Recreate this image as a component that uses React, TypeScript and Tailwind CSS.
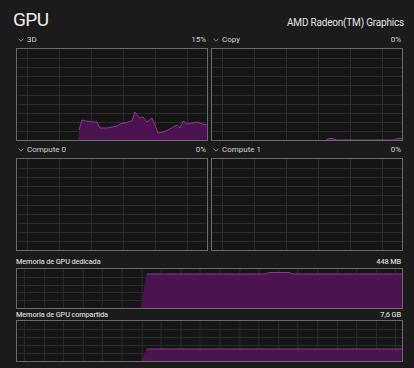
import React from "react";

const PURPLE_FILL = "#4b1450";
const PURPLE_LINE = "#8b3a8e";
const GRID = "#2c2c2c";

function Grid({ x0, y0, w, h, vStart, vStep, rows }: { x0: number; y0: number; w: number; h: number; vStart: number; vStep: number; rows: number }) {
  const vs: number[] = [];
  for (let x = vStart; x < x0 + w; x += vStep) vs.push(x);
  const hs: number[] = [];
  for (let i = 1; i < rows; i++) hs.push(y0 + (h * i) / rows);
  return (
    <g stroke={GRID} strokeWidth={1} shapeRendering="crispEdges">
      {vs.map((x, i) => (
        <line key={"v" + i} x1={Math.round(x) + 0.5} y1={y0} x2={Math.round(x) + 0.5} y2={y0 + h} />
      ))}
      {hs.map((y, i) => (
        <line key={"h" + i} x1={x0} y1={Math.round(y) + 0.5} x2={x0 + w} y2={Math.round(y) + 0.5} />
      ))}
    </g>
  );
}

function Chart({ x0, y0, w, h, vStart, vStep, rows, poly, height }: { x0: number; y0: number; w: number; h: number; vStart: number; vStep: number; rows: number; poly?: number[][]; height: string }) {
  return (
    <div className={`border border-[#6a6a6a] bg-[#151515] ${height}`}>
      <svg className="block w-full h-full" viewBox={`${x0} ${y0} ${w} ${h}`} preserveAspectRatio="none">
        <Grid x0={x0} y0={y0} w={w} h={h} vStart={vStart} vStep={vStep} rows={rows} />
        {poly && (
          <>
            <polygon points={poly.map((p) => p.join(",")).join(" ")} fill={PURPLE_FILL} />
            <polyline
              points={poly.slice(1, -1).map((p) => p.join(",")).join(" ")}
              fill="none"
              stroke={PURPLE_LINE}
              strokeWidth={1}
            />
          </>
        )}
      </svg>
    </div>
  );
}

function Label({ name, value }: { name: string; value: string }) {
  return (
    <div className="flex items-center justify-between h-[12px] text-[8px] leading-none text-[#d4d4d4]">
      <div className="flex items-center">
        <svg width="6" height="4" viewBox="0 0 6 4" className="ml-[2px] mr-[3px]">
          <path d="M0.5 0.6 L3 3.2 L5.5 0.6" fill="none" stroke="#9a9a9a" strokeWidth="0.9" />
        </svg>
        <span>{name}</span>
      </div>
      <span className="pr-[2px]">{value}</span>
    </div>
  );
}

const d3: number[][] = [
  [78, 140], [79, 130], [82, 120], [86, 121], [92, 122], [97, 122], [100, 128], [107, 128], [112, 127], [117, 126], [120, 124], [128, 122], [132, 121], [135, 112], [140, 118], [143, 117], [147, 122], [152, 118], [155, 125], [158, 133], [163, 132], [168, 130], [173, 127], [177, 125], [180, 128], [183, 121], [187, 124], [192, 123], [197, 122], [203, 124], [207, 125], [207, 140],
];

const copy: number[][] = [
  [211, 140], [326, 140], [329, 138.5], [333, 138.5], [336, 140], [394, 140], [397, 138.5], [400, 138.5], [403, 139], [403, 140],
];

const dedicated: number[][] = [
  [141, 307], [147, 273], [266, 273], [270, 271.5], [290, 271.5], [294, 273], [403, 273], [403, 307],
];

const shared: number[][] = [
  [141, 360], [147, 348], [403, 348], [403, 360],
];

export default function App() {
  return (
    <div
      className="w-[414px] h-[368px] bg-[#1b1b1b] overflow-hidden"
      style={{ fontFamily: 'Roboto, "Noto Sans", sans-serif' }}
    >
      <div className="flex items-end justify-between pl-[13px] pr-[10px] h-[34px] pb-[5px]">
        <span className="text-[19px] leading-none text-[#ececec] tracking-[-0.6px]">GPU</span>
        <span className="text-[10px] leading-none text-[#e4e4e4] tracking-[-0.2px] mb-[1px]">AMD Radeon(TM) Graphics</span>
      </div>
      <div className="pl-[16px] pr-[11px]">
        <div className="grid grid-cols-2 gap-x-[3px]">
          <div>
            <Label name="3D" value="15%" />
            <div className="mt-[2px]">
              <Chart x0={17} y0={49} w={190} h={91} vStart={27} vStep={32} rows={10} poly={d3} height="h-[93px]" />
            </div>
          </div>
          <div>
            <Label name="Copy" value="0%" />
            <div className="mt-[2px]">
              <Chart x0={212} y0={49} w={190} h={91} vStart={222} vStep={32} rows={10} poly={copy} height="h-[93px]" />
            </div>
          </div>
          <div className="mt-[3px]">
            <Label name="Compute 0" value="0%" />
            <div className="mt-[2px]">
              <Chart x0={17} y0={159} w={190} h={91} vStart={27} vStep={32} rows={10} height="h-[93px]" />
            </div>
          </div>
          <div className="mt-[3px]">
            <Label name="Compute 1" value="0%" />
            <div className="mt-[2px]">
              <Chart x0={212} y0={159} w={190} h={91} vStart={222} vStep={32} rows={10} height="h-[93px]" />
            </div>
          </div>
        </div>
        <div className="mt-[6px]">
          <div className="flex items-center justify-between h-[10px] text-[7.4px] font-medium leading-none text-[#d4d4d4] tracking-[-0.15px]">
            <span>Memoria de GPU dedicada</span>
            <span className="pr-[2px]">448 MB</span>
          </div>
          <div className="mt-[1px]">
            <Chart x0={17} y0={268} w={386} h={39} vStart={24} vStep={19.6} rows={5} poly={dedicated} height="h-[41px]" />
          </div>
          <div className="flex items-center justify-between h-[11px] text-[7.4px] font-medium leading-none text-[#d4d4d4] tracking-[-0.15px]">
            <span>Memoria de GPU compartida</span>
            <span className="pr-[2px]">7,6 GB</span>
          </div>
          <div>
            <Chart x0={17} y0={320} w={386} h={40} vStart={24} vStep={19.6} rows={5} poly={shared} height="h-[42px]" />
          </div>
        </div>
      </div>
    </div>
  );
}
